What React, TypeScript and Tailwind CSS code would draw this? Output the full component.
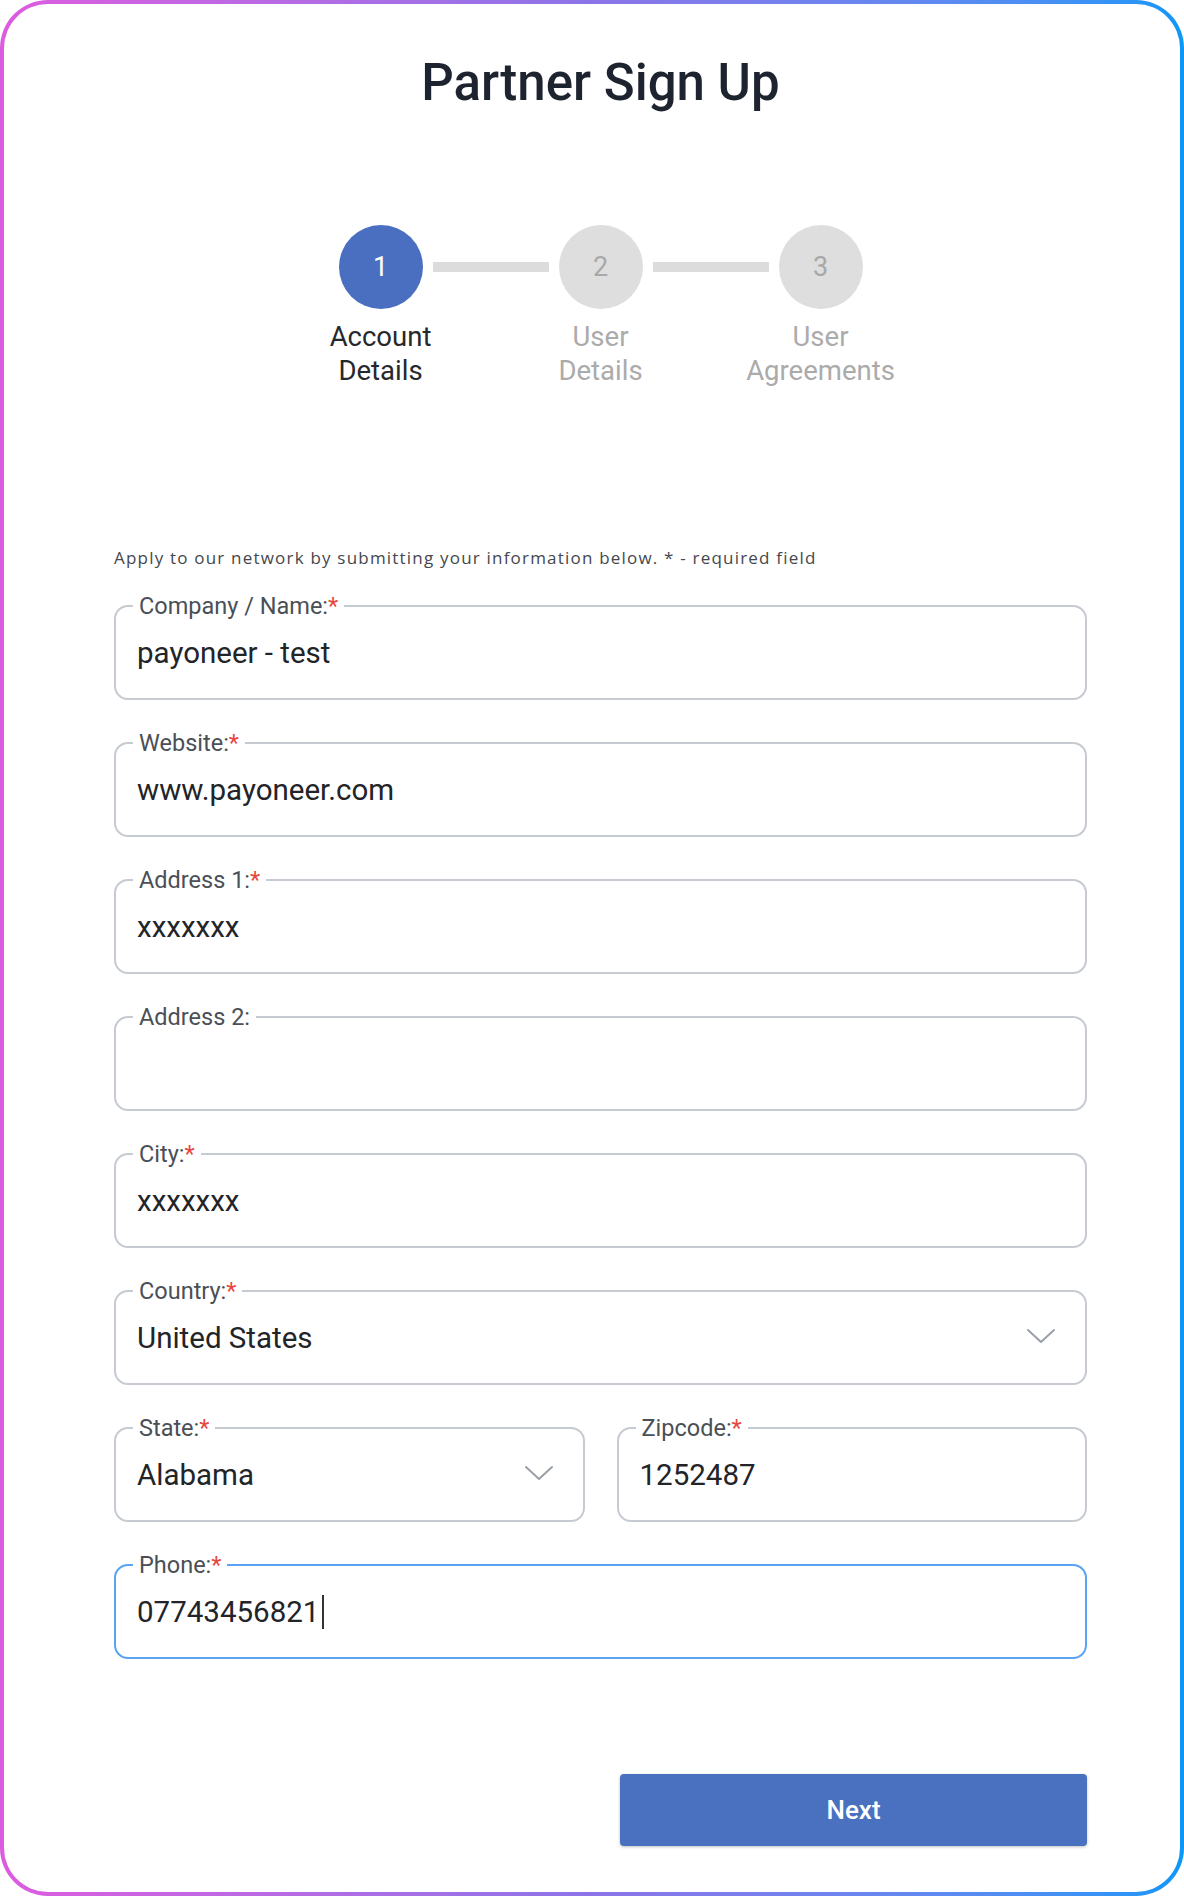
import React from 'react';

interface Step {
  num: number;
  lines: string[];
  active: boolean;
}

interface Field {
  label: string;
  value: string;
  required: boolean;
  select?: boolean;
  focused?: boolean;
}

const steps: Step[] = [
  { num: 1, lines: ['Account', 'Details'], active: true },
  { num: 2, lines: ['User', 'Details'], active: false },
  { num: 3, lines: ['User', 'Agreements'], active: false },
];

function Chevron() {
  return (
    <svg width="30" height="16" viewBox="0 0 30 16" fill="none" className="-mt-[4px] shrink-0">
      <polyline points="2,2 15,14 28,2" stroke="#9aa0a8" strokeWidth="2" strokeLinecap="round" strokeLinejoin="round" />
    </svg>
  );
}

function FormField({ label, value, required, select, focused }: Field) {
  return (
    <fieldset
      className={`rounded-[14px] border-2 pl-[21px] pr-[29px] pt-[14px] pb-[24px] ${
        focused ? 'border-[#5aa2f2]' : 'border-[#c6cad1]'
      }`}
    >
      <legend className="-ml-[4px] px-[6px] text-[23.5px] leading-[24px] text-[#4b4f56]">
        {label}
        {required && <span className="text-[#e8473f]">*</span>}
      </legend>
      <div className="flex h-[42px] items-center justify-between">
        <div className="flex items-center text-[29.5px] text-[#222428]">
          {value}
          {focused && <span className="ml-[3px] inline-block h-[34px] w-[2px] bg-[#333]" />}
        </div>
        {select && <Chevron />}
      </div>
    </fieldset>
  );
}

export default function App() {
  return (
    <div className="h-[1896px] w-full bg-white">
      <div className="h-full rounded-[48px] bg-gradient-to-r from-[#dc5cdf] via-[#8b74e8] to-[#0897f7] p-[4px]">
        <div
          className="flex h-full flex-col rounded-[44px] bg-white pl-[110px] pr-[93px] pt-[50px]"
          style={{ fontFamily: 'Roboto, "Liberation Sans", sans-serif' }}
        >
          <h1 className="text-center text-[51px] font-medium leading-[58px] text-[#1e2330]">Partner Sign Up</h1>

          {/* stepper */}
          <div className="mt-[113px] flex items-start justify-center">
            {steps.map((s, i) => (
              <React.Fragment key={s.num}>
                {i > 0 && <div className="mx-[10px] mt-[37px] h-[10px] w-[116px] bg-[#dcdcdc]" />}
                <div className="flex w-[84px] flex-col items-center">
                  <div
                    className={`flex h-[84px] w-[84px] items-center justify-center rounded-full text-[27px] ${
                      s.active ? 'bg-[#4a6fc0] text-white' : 'bg-[#dedede] text-[#a8a8a8]'
                    }`}
                  >
                    {s.num}
                  </div>
                  <div
                    className={`mt-[11px] whitespace-nowrap text-center text-[27.5px] leading-[34px] ${
                      s.active ? 'text-[#26282c]' : 'text-[#ababab]'
                    }`}
                  >
                    {s.lines.map((l) => (
                      <div key={l}>{l}</div>
                    ))}
                  </div>
                </div>
              </React.Fragment>
            ))}
          </div>

          <p
            className="mt-[158px] text-[17px] leading-[24px] tracking-[1.2px] text-[#45474d]"
            style={{ fontFamily: '"Open Sans", sans-serif' }}
          >
            Apply to our network by submitting your information below. * - required field
          </p>

          <div className="mt-[24px] flex flex-col gap-[31px]">
            <FormField label="Company / Name:" value="payoneer - test" required />
            <FormField label="Website:" value="www.payoneer.com" required />
            <FormField label="Address 1:" value="xxxxxxx" required />
            <FormField label="Address 2:" value="" required={false} />
            <FormField label="City:" value="xxxxxxx" required />
            <FormField label="Country:" value="United States" required select />
            <div className="grid grid-cols-2 gap-[32px]">
              <FormField label="State:" value="Alabama" required select />
              <FormField label="Zipcode:" value="1252487" required />
            </div>
            <FormField label="Phone:" value="07743456821" required focused />
          </div>

          <div className="mt-[115px] flex justify-end">
            <button className="h-[72px] w-[467px] rounded-[4px] bg-[#4a71c0] text-[26px] font-medium text-white shadow-[0_1px_3px_rgba(0,0,0,0.25)]">
              Next
            </button>
          </div>
        </div>
      </div>
    </div>
  );
}
